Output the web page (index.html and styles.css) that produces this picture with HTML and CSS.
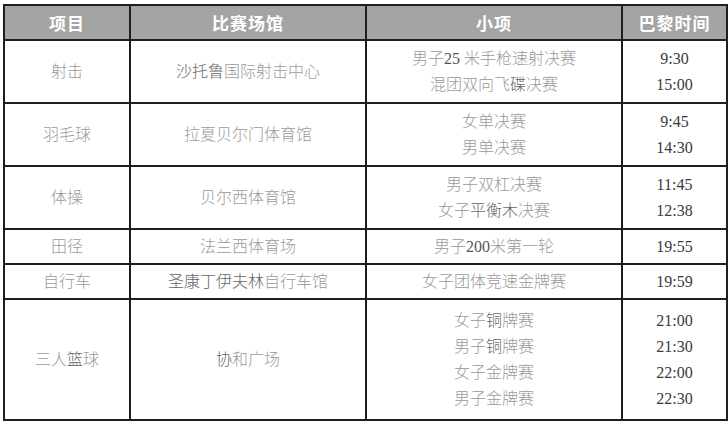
FILE: index.html
```html
<!DOCTYPE html>
<html lang="zh">
<head>
<meta charset="utf-8">
<link rel="stylesheet" href="styles.css">
</head>
<body>
<table class="schedule">
  <colgroup>
    <col class="c1"><col class="c2"><col class="c3"><col class="c4">
  </colgroup>
  <thead>
    <tr class="head"><th>项目</th><th>比赛场馆</th><th>小项</th><th>巴黎时间</th></tr>
  </thead>
  <tbody>
    <tr class="two">
      <td>射击</td>
      <td><span class="dk">沙托鲁</span>国际射击中心</td>
      <td>男子<span class="num">25</span> 米手枪速射决赛<br>混团双向飞<span class="dk">碟</span>决赛</td>
      <td class="time">9:30<br>15:00</td>
    </tr>
    <tr class="two">
      <td>羽毛球</td>
      <td>拉夏贝尔门体育馆</td>
      <td>女单决赛<br>男单决赛</td>
      <td class="time">9:45<br>14:30</td>
    </tr>
    <tr class="two">
      <td>体操</td>
      <td>贝尔西体育馆</td>
      <td>男子双杠决赛<br>女子<span class="dk">平衡木</span>决赛</td>
      <td class="time">11:45<br>12:38</td>
    </tr>
    <tr class="one">
      <td>田径</td>
      <td>法兰西体育场</td>
      <td>男子<span class="num">200</span>米第一轮</td>
      <td class="time">19:55</td>
    </tr>
    <tr class="one">
      <td>自行车</td>
      <td><span class="dk">圣康丁伊夫林</span>自行车馆</td>
      <td>女子团体竞速金牌赛</td>
      <td class="time">19:59</td>
    </tr>
    <tr class="four">
      <td>三人<span class="dk">篮</span>球</td>
      <td><span class="dk">协</span>和广场</td>
      <td>女子<span class="dk">铜</span>牌赛<br>男子<span class="dk">铜</span>牌赛<br>女子金牌赛<br>男子金牌赛</td>
      <td class="time">21:00<br>21:30<br>22:00<br>22:30</td>
    </tr>
  </tbody>
</table>
</body>
</html>
```
FILE: styles.css
```css
html, body {
  margin: 0;
  padding: 0;
  background: #ffffff;
}

body {
  padding: 4px 0 0 3px;
}

.schedule {
  border-collapse: collapse;
  width: 723px;
  table-layout: fixed;
  font-family: "Liberation Serif", "Noto Sans CJK SC", serif;
  font-size: 16px;
  color: #9a9a9a;
}

.c1 { width: 126px; }
.c2 { width: 236px; }
.c3 { width: 256px; }
.c4 { width: 105px; }

.schedule th,
.schedule td {
  border: 2px solid #1e1e1e;
  text-align: center;
  vertical-align: middle;
  padding: 0;
  line-height: 26px;
  font-weight: 300;
}

.schedule th {
  background: #a4a4a4;
  color: #ffffff;
  font-family: "Noto Sans CJK SC", sans-serif;
  font-weight: 700;
  font-size: 17px;
  letter-spacing: 1px;
  height: 33px;
  line-height: 20px;
}

.one td { height: 33px; }
.two td { height: 61px; }
.four td { height: 119px; }

.time {
  font-family: "Liberation Serif", serif;
  color: #3a3a3a;
  font-size: 16px;
}

.num {
  font-family: "Liberation Serif", serif;
  color: #555555;
}

.dk {
  color: #666666;
}
```
